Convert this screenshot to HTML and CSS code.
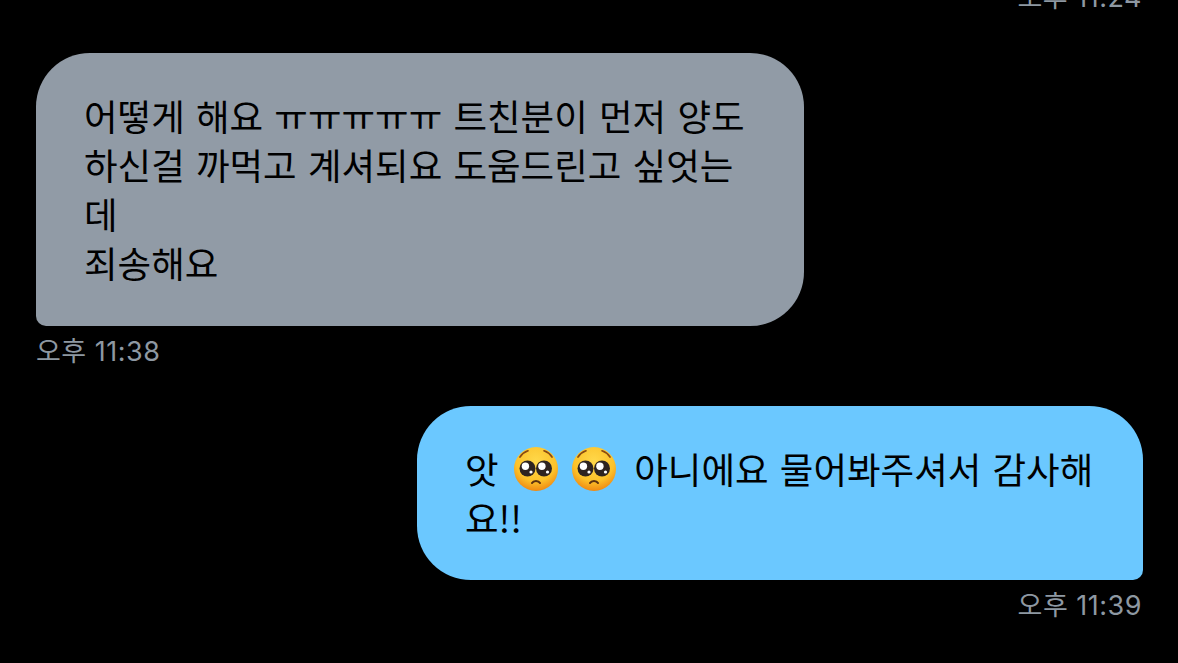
FILE: index.html
```html
<!DOCTYPE html>
<html lang="ko">
	<head>
		<meta charset="utf-8">
		<title>Messages</title>
		<link rel="stylesheet" href="styles.css">
	</head>

	<body>
		<svg class="defs" width="0" height="0">
			<defs>
				<radialGradient id="faceFill" cx="50%" cy="32%" r="70%">
					<stop offset="0" stop-color="#ffd84a"/>
					<stop offset="0.65" stop-color="#fcc22a"/>
					<stop offset="1" stop-color="#ee8410"/>
				</radialGradient>
				<symbol id="pleading" viewBox="0 0 44 44">
					<circle cx="22" cy="22" r="22" fill="url(#faceFill)"/>
					<path d="M6 10 C8 7 10.5 5 14 3.8" fill="none" stroke="#8a4a12" stroke-width="1.7" stroke-linecap="round"/>
					<path d="M38 10 C36 7 33.5 5 30 3.8" fill="none" stroke="#8a4a12" stroke-width="1.7" stroke-linecap="round"/>
					<circle cx="13.5" cy="21.5" r="8" fill="#2e2420"/>
					<circle cx="30" cy="21.5" r="8" fill="#2e2420"/>
					<circle cx="11.4" cy="19.2" r="3.7" fill="#fff"/>
					<circle cx="27.9" cy="19.2" r="3.7" fill="#fff"/>
					<circle cx="17" cy="25" r="1.6" fill="#fff"/>
					<circle cx="33.5" cy="25" r="1.6" fill="#fff"/>
					<path d="M18 36 C19.5 33.2 24.5 33.2 26 36" fill="none" stroke="#5c3210" stroke-width="2" stroke-linecap="round"/>
				</symbol>
			</defs>
		</svg>

		<div class="chat">
			<div class="time time-top">오후 11:24</div>

			<div class="message received">
				<div class="bubble">어떻게 해요 ㅠㅠㅠㅠㅠ 트친분이 먼저 양도<br>하신걸 까먹고 계셔되요 도움드린고 싶엇는<br>데<br>죄송해요</div>
				<div class="time">오후 11:38</div>
			</div>

			<div class="message sent">
				<div class="bubble">앗 <svg class="emoji"><use href="#pleading"/></svg> <svg class="emoji"><use href="#pleading"/></svg> 아니에요 물어봐주셔서 감사해<br>요!!</div>
				<div class="time">오후 11:39</div>
			</div>
		</div>
	</body>
</html>
```
FILE: styles.css
```css
html, body {
	margin: 0;
	height: 100%;
	background: #000;
	overflow: hidden;
}

.defs {
	display: block;
	height: 0;
}

.chat {
	display: flex;
	flex-direction: column;
	padding: 0 35px 0 36px;
	font-family: "Noto Sans CJK KR", "Inter", sans-serif;
}

.message {
	display: flex;
	flex-direction: column;
}

.received {
	align-items: flex-start;
	margin-top: 38px;
}

.sent {
	align-items: flex-end;
	margin-top: 37px;
}

.bubble {
	box-sizing: border-box;
	padding: 38px 48px;
	font-size: 36.5px;
	line-height: 49px;
	word-spacing: 1px;
	color: #000;
	white-space: nowrap;
}

.received .bubble {
	width: 768px;
	padding-bottom: 39px;
	background: #919ba6;
	border-radius: 54px 54px 54px 10px;
}

.sent .bubble {
	width: 726px;
	background: #6bc8ff;
	border-radius: 54px 54px 10px 54px;
}

.emoji {
	width: 44px;
	height: 44px;
	margin: -14px 0 0 4px;
	vertical-align: -7px;
}

.emoji + .emoji {
	margin-left: 3px;
	margin-right: 7px;
}

.time {
	margin-top: 9px;
	font-family: "Inter", "Noto Sans CJK KR", sans-serif;
	font-size: 27px;
	letter-spacing: 0.5px;
	line-height: 34px;
	color: #8e98a2;
}

.sent .time {
	margin-right: 1px;
}

.time-top {
	margin: -19px 1px 0 0;
	height: 34px;
	text-align: right;
}
```
